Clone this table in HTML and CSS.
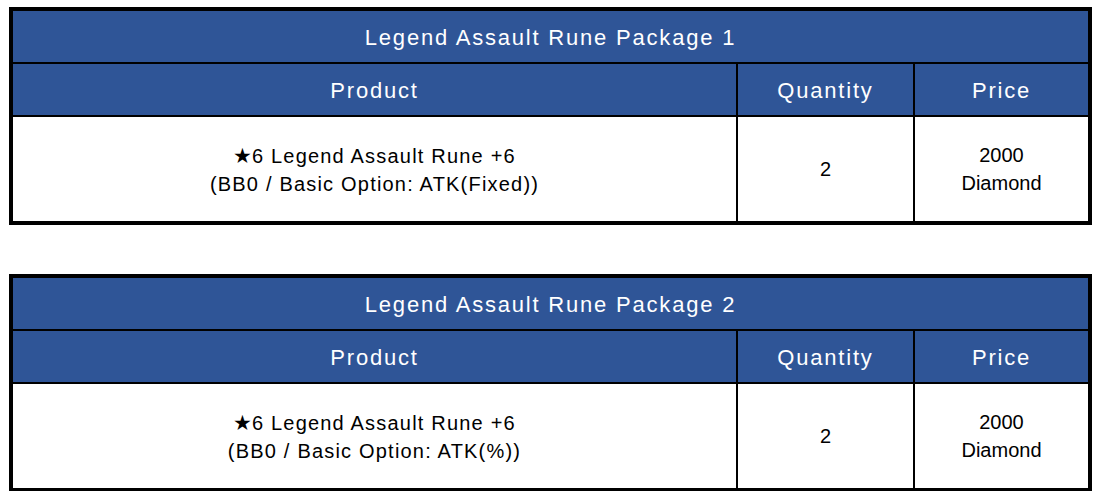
FILE: index.html
```html
<!DOCTYPE html>
<html lang="en">
<head>
<meta charset="utf-8">
<title>Legend Assault Rune Packages</title>
<link rel="stylesheet" href="styles.css">
</head>
<body>
<div class="page">
  <table class="pkg">
    <colgroup>
      <col class="col-product">
      <col class="col-qty">
      <col class="col-price">
    </colgroup>
    <tr>
      <th class="title" colspan="3">Legend Assault Rune Package 1</th>
    </tr>
    <tr class="head">
      <th>Product</th>
      <th class="divided">Quantity</th>
      <th class="divided">Price</th>
    </tr>
    <tr class="body">
      <td class="product"><span class="star">★</span>6 Legend Assault Rune +6<br>(BB0 / Basic Option: ATK(Fixed))</td>
      <td class="divided">2</td>
      <td class="divided">2000<br>Diamond</td>
    </tr>
  </table>

  <table class="pkg">
    <colgroup>
      <col class="col-product">
      <col class="col-qty">
      <col class="col-price">
    </colgroup>
    <tr>
      <th class="title" colspan="3">Legend Assault Rune Package 2</th>
    </tr>
    <tr class="head">
      <th>Product</th>
      <th class="divided">Quantity</th>
      <th class="divided">Price</th>
    </tr>
    <tr class="body">
      <td class="product"><span class="star">★</span>6 Legend Assault Rune +6<br>(BB0 / Basic Option: ATK(%))</td>
      <td class="divided">2</td>
      <td class="divided">2000<br>Diamond</td>
    </tr>
  </table>
</div>
</body>
</html>
```
FILE: styles.css
```css
html, body {
  margin: 0;
  padding: 0;
  background: #ffffff;
}

.page {
  padding: 7px 0 0 9px;
  display: flex;
  flex-direction: column;
  gap: 49px;
}

.pkg {
  table-layout: fixed;
  border-collapse: separate;
  border-spacing: 0;
  border: 4px solid #000;
  width: 1083px;
  font-family: "Liberation Sans", Arial, sans-serif;
}

.col-product { width: 723px; }
.col-qty { width: 177px; }
.col-price { width: 175px; }

.pkg th,
.pkg td {
  padding: 0;
  text-align: center;
  vertical-align: middle;
}

.pkg th {
  background: #2f5597;
  color: #ffffff;
  font-weight: normal;
  font-size: 22px;
  letter-spacing: 1.8px;
  height: 49px;
  padding-top: 2px;
}

.head th {
  border-top: 2px solid #000;
  height: 48px;
  padding-top: 3px;
}

.pkg .divided {
  border-left: 2px solid #000;
}

.body td {
  border-top: 2px solid #000;
  height: 102px;
  font-size: 20px;
  line-height: 28px;
  color: #000;
}

.body .product {
  letter-spacing: 1.2px;
  padding-top: 2px;
}

.star {
  font-family: "DejaVu Sans", sans-serif;
  font-size: 21px;
  letter-spacing: 0;
}
```
